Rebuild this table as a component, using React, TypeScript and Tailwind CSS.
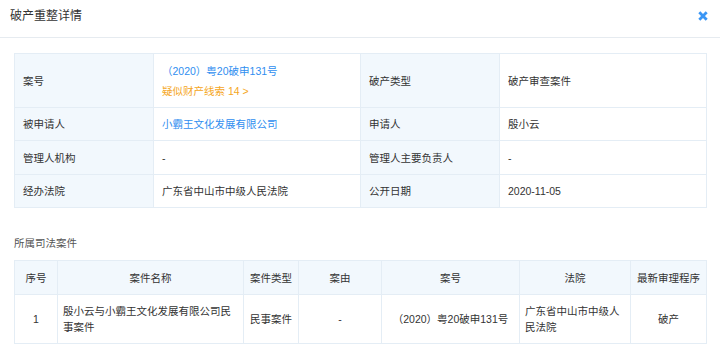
import React from "react";

const font = { fontFamily: '"Liberation Sans", "Noto Sans CJK SC", sans-serif' };

export default function App() {
  const lbl = "bg-[#f2f8fd] border border-[#e4edf5] px-[8px] text-[#333] align-middle";
  const val = "bg-white border border-[#e4edf5] px-[8px] text-[#333] align-middle";
  const th = "bg-[#f2f8fd] border border-[#e4edf5] px-[5px] font-normal text-[#333] text-center align-middle";
  const td = "bg-white border border-[#e4edf5] px-[5px] text-[#333] text-center align-middle";
  return (
    <div className="w-[720px] h-[360px] bg-white overflow-hidden text-[10.5px] leading-[16px]" style={font}>
      <div className="h-[38px] border-b border-[#e6ebf0] flex items-start justify-between pl-[10px] pr-[12px] pt-[8px]">
        <div className="text-[12px] leading-[16px] text-[#333]">破产重整详情</div>
        <svg width="10" height="10" viewBox="0 0 10 10" className="mt-[3px]">
          <path d="M1.3 1.3 L8.7 8.7 M8.7 1.3 L1.3 8.7" stroke="#3a96f5" strokeWidth="2.8" strokeLinecap="butt" />
        </svg>
      </div>
      <div className="px-[14px] pt-[15px]">
        <table className="w-[692px] border-collapse table-fixed">
          <colgroup>
            <col className="w-[139px]" />
            <col className="w-[207px]" />
            <col className="w-[139px]" />
            <col className="w-[207px]" />
          </colgroup>
          <tbody>
            <tr className="h-[54px]">
              <td className={lbl}>案号</td>
              <td className={val}>
                <div className="text-[#2f8ef0] leading-[20px]">（2020）粤20破申131号</div>
                <div className="text-[#f5a623] leading-[20px]">疑似财产线索 14 &gt;</div>
              </td>
              <td className={lbl}>破产类型</td>
              <td className={val}>破产审查案件</td>
            </tr>
            <tr className="h-[33px]">
              <td className={lbl}>被申请人</td>
              <td className={val}><span className="text-[#2f8ef0]">小霸王文化发展有限公司</span></td>
              <td className={lbl}>申请人</td>
              <td className={val}>殷小云</td>
            </tr>
            <tr className="h-[34px]">
              <td className={lbl}>管理人机构</td>
              <td className={val}>-</td>
              <td className={lbl}>管理人主要负责人</td>
              <td className={val}>-</td>
            </tr>
            <tr className="h-[33px]">
              <td className={lbl}>经办法院</td>
              <td className={val}>广东省中山市中级人民法院</td>
              <td className={lbl}>公开日期</td>
              <td className={val}>2020-11-05</td>
            </tr>
          </tbody>
        </table>
        <div className="mt-[27px] text-[#555] leading-[16px]">所属司法案件</div>
        <table className="mt-[9px] w-[692px] border-collapse table-fixed">
          <colgroup>
            <col className="w-[43px]" />
            <col className="w-[186px]" />
            <col className="w-[55px]" />
            <col className="w-[83px]" />
            <col className="w-[138px]" />
            <col className="w-[111px]" />
            <col className="w-[76px]" />
          </colgroup>
          <thead>
            <tr className="h-[34px]">
              <th className={th}>序号</th>
              <th className={th}>案件名称</th>
              <th className={th}>案件类型</th>
              <th className={th}>案由</th>
              <th className={th}>案号</th>
              <th className={th}>法院</th>
              <th className={th + " px-0"}>最新审理程序</th>
            </tr>
          </thead>
          <tbody>
            <tr className="h-[49px]">
              <td className={td}>1</td>
              <td className={td + " text-left text-[#2f8ef0]"}>殷小云与小霸王文化发展有限公司民事案件</td>
              <td className={td}>民事案件</td>
              <td className={td}>-</td>
              <td className={td}>（2020）粤20破申131号</td>
              <td className={td + " text-left"}>广东省中山市中级人民法院</td>
              <td className={td}>破产</td>
            </tr>
          </tbody>
        </table>
      </div>
    </div>
  );
}
